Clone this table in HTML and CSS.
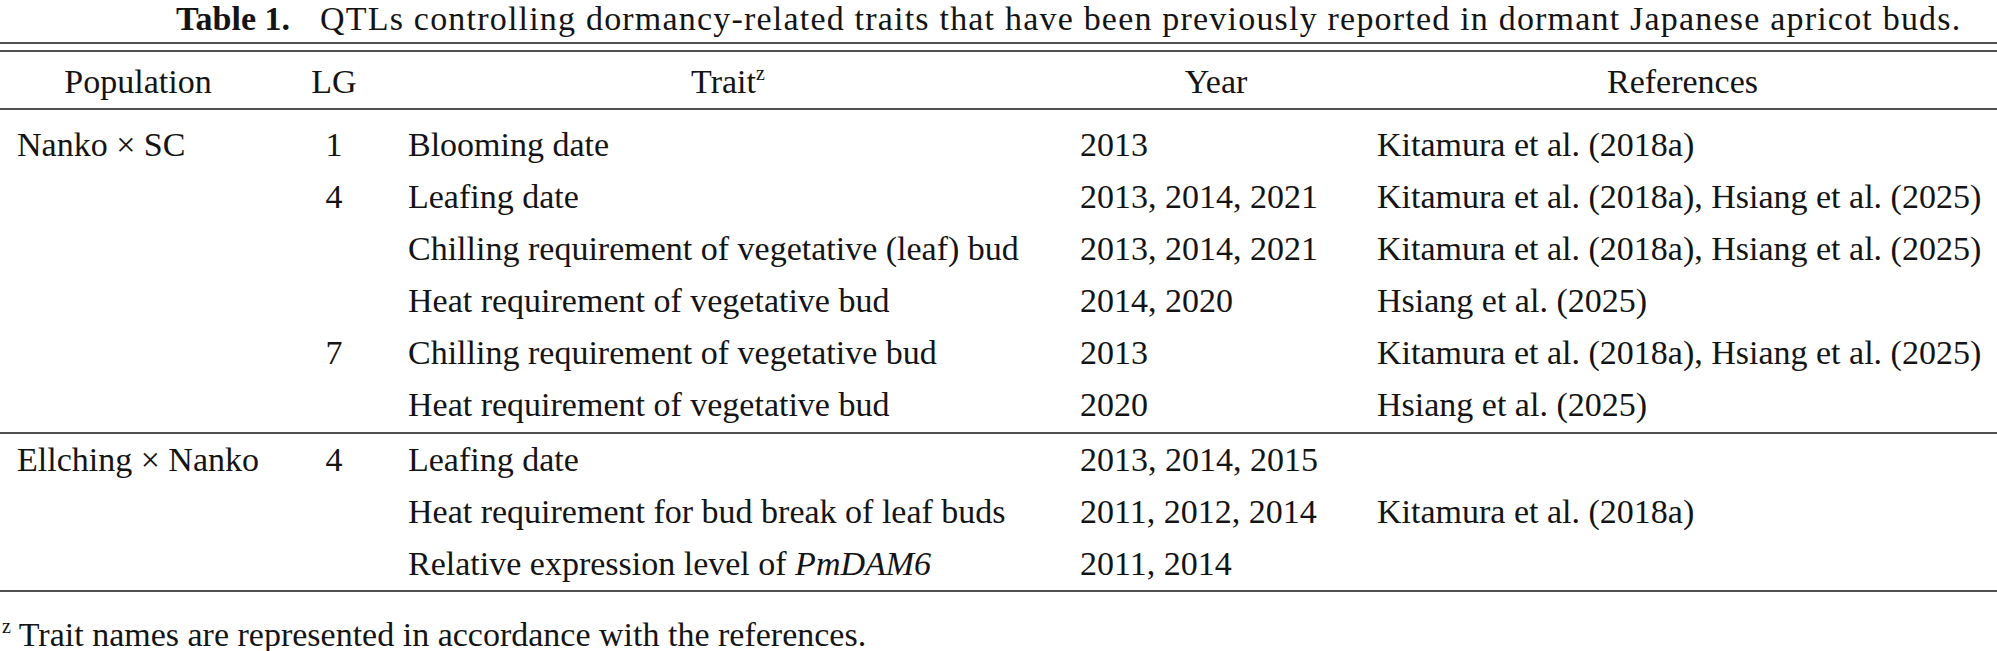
FILE: index.html
```html
<!DOCTYPE html>
<html lang="en">
<head>
<meta charset="utf-8">
<title>Table 1</title>
<link rel="stylesheet" href="styles.css">
</head>
<body>
<div class="title"><span class="label">Table 1.</span>QTLs controlling dormancy-related traits that have been previously reported in dormant Japanese apricot buds.</div>
<div class="double-rule"></div>
<table class="qtl">
  <colgroup>
    <col class="c-pop"><col class="c-lg"><col class="c-trait"><col class="c-year"><col class="c-ref">
  </colgroup>
  <thead>
    <tr>
      <th>Population</th>
      <th>LG</th>
      <th>Trait<sup class="note">z</sup></th>
      <th>Year</th>
      <th>References</th>
    </tr>
  </thead>
  <tbody>
    <tr class="first">
      <td class="pop">Nanko × SC</td><td class="lg">1</td><td class="trait">Blooming date</td><td class="year">2013</td><td class="ref">Kitamura et al. (2018a)</td>
    </tr>
    <tr>
      <td class="pop"></td><td class="lg">4</td><td class="trait">Leafing date</td><td class="year">2013, 2014, 2021</td><td class="ref">Kitamura et al. (2018a), Hsiang et al. (2025)</td>
    </tr>
    <tr>
      <td class="pop"></td><td class="lg"></td><td class="trait">Chilling requirement of vegetative (leaf) bud</td><td class="year">2013, 2014, 2021</td><td class="ref">Kitamura et al. (2018a), Hsiang et al. (2025)</td>
    </tr>
    <tr>
      <td class="pop"></td><td class="lg"></td><td class="trait">Heat requirement of vegetative bud</td><td class="year">2014, 2020</td><td class="ref">Hsiang et al. (2025)</td>
    </tr>
    <tr>
      <td class="pop"></td><td class="lg">7</td><td class="trait">Chilling requirement of vegetative bud</td><td class="year">2013</td><td class="ref">Kitamura et al. (2018a), Hsiang et al. (2025)</td>
    </tr>
    <tr class="last">
      <td class="pop"></td><td class="lg"></td><td class="trait">Heat requirement of vegetative bud</td><td class="year">2020</td><td class="ref">Hsiang et al. (2025)</td>
    </tr>
  </tbody>
  <tbody>
    <tr>
      <td class="pop">Ellching × Nanko</td><td class="lg">4</td><td class="trait">Leafing date</td><td class="year">2013, 2014, 2015</td><td class="ref"></td>
    </tr>
    <tr>
      <td class="pop"></td><td class="lg"></td><td class="trait">Heat requirement for bud break of leaf buds</td><td class="year">2011, 2012, 2014</td><td class="ref">Kitamura et al. (2018a)</td>
    </tr>
    <tr class="end">
      <td class="pop"></td><td class="lg"></td><td class="trait">Relative expression level of <i class="gene">PmDAM6</i></td><td class="year">2011, 2014</td><td class="ref"></td>
    </tr>
  </tbody>
</table>
<p class="footnote"><sup class="note">z</sup> Trait names are represented in accordance with the references.</p>
</body>
</html>
```

FILE: styles.css
```css
html, body {
  margin: 0;
  padding: 0;
  background: #ffffff;
}

body {
  width: 1997px;
  height: 651px;
  overflow: hidden;
  font-family: "Liberation Serif", "Times New Roman", serif;
  font-size: 34px;
  color: #141414;
}

.title {
  height: 38px;
  font-size: 34px;
  line-height: 38px;
  padding-left: 176px;
  letter-spacing: 1.2px;
  white-space: nowrap;
}

.title .label {
  font-weight: bold;
  letter-spacing: 0;
  margin-right: 30px;
}

.double-rule {
  margin-top: 4px;
  height: 6px;
  border-top: 2px solid #505050;
  border-bottom: 2px solid #505050;
}

.qtl {
  width: 1997px;
  table-layout: fixed;
  border-collapse: separate;
  border-spacing: 0;
}

.c-pop { width: 276px; }
.c-lg { width: 116px; }
.c-trait { width: 672px; }
.c-year { width: 304px; }
.c-ref { width: 629px; }

.qtl th,
.qtl td {
  padding: 0;
  line-height: 52px;
  font-weight: normal;
  white-space: nowrap;
  vertical-align: baseline;
}

.qtl th {
  text-align: center;
  padding-top: 4px;
  border-bottom: 2px solid #505050;
}

.qtl td { text-align: left; }
.qtl td.pop { padding-left: 17px; }
.qtl td.lg { text-align: center; }
.qtl td.trait { padding-left: 16px; }
.qtl td.year { padding-left: 16px; }
.qtl td.ref { padding-left: 9px; }

.qtl tr.first td { padding-top: 9px; }
.qtl tr.last td {
  padding-bottom: 1px;
  border-bottom: 2px solid #505050;
}
.qtl tr.end td { border-bottom: 2px solid #505050; }

.note {
  font-size: 20px;
  line-height: 0;
  vertical-align: 13px;
}

.gene { font-style: italic; }

.footnote {
  margin: 23px 0 0 0;
  padding-left: 2px;
  line-height: 40px;
  white-space: nowrap;
}
```
